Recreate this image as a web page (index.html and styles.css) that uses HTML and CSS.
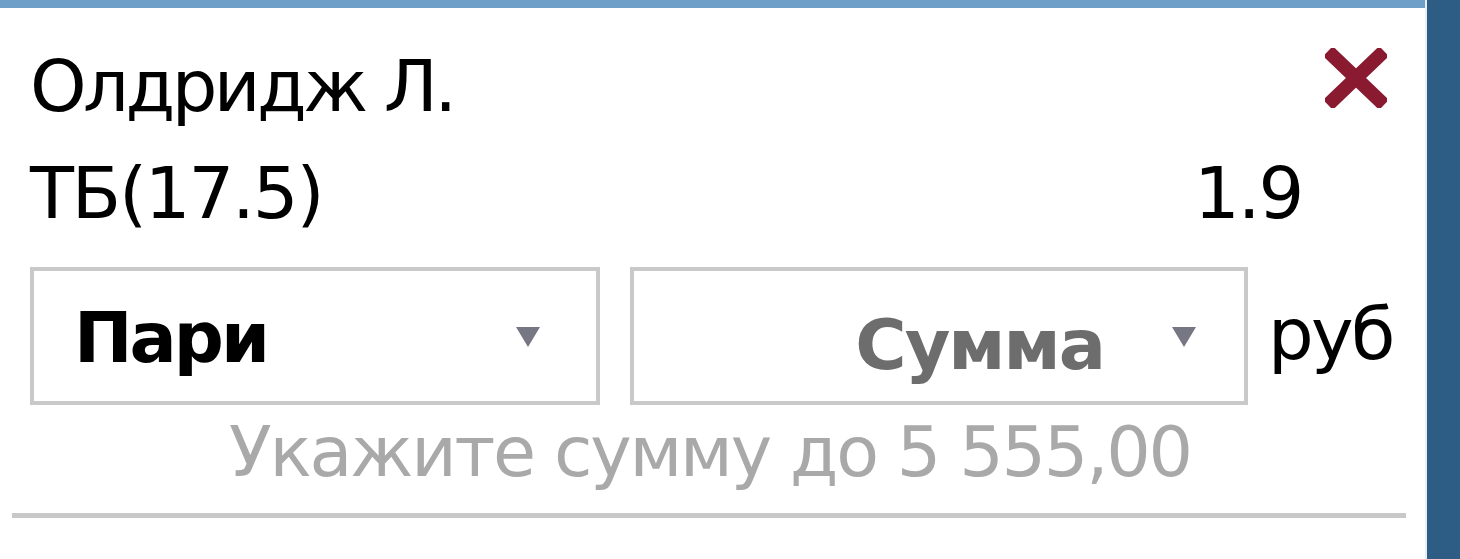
FILE: index.html
```html
<!DOCTYPE html>
<html lang="ru">
<head>
<meta charset="utf-8">
<link rel="stylesheet" href="styles.css">
</head>
<body>
<div class="page">
  <div class="slip">
    <div class="topbar"></div>
    <div class="content">
      <div class="row row-name">
        <span class="name">Олдридж Л.</span>
        <svg class="close" viewBox="0 0 62 60" width="62" height="60"><path d="M8 8 L54 52 M54 8 L8 52" stroke="#8a1a30" stroke-width="14" stroke-linecap="square" fill="none"/></svg>
      </div>
      <div class="row row-bet">
        <span class="bet">ТБ(17.5)</span>
        <span class="odd">1.9</span>
      </div>
      <div class="row row-inputs">
        <div class="select type"><span class="val">Пари</span><span class="arrow"></span></div>
        <div class="select sum"><span class="val">Сумма</span><span class="arrow"></span></div>
        <span class="cur">руб</span>
      </div>
      <div class="hint">Укажите сумму до 5 555,00</div>
      <div class="divider"></div>
    </div>
  </div>
  <div class="sidebar"></div>
</div>
</body>
</html>
```
FILE: styles.css
```css
html, body {
  margin: 0;
  padding: 0;
  background: #ffffff;
}
.page {
  display: flex;
  width: 1460px;
  height: 559px;
  overflow: hidden;
  font-family: "DejaVu Sans", Verdana, sans-serif;
  color: #000;
}
.slip {
  flex: 1;
  display: flex;
  flex-direction: column;
  border-right: 2px solid #e8eef4;
}
.topbar {
  height: 8px;
  background: #6e9fc8;
}
.content {
  padding: 0 55px 0 12px;
  display: flex;
  flex-direction: column;
}
.sidebar {
  width: 33px;
  background: #2d5c85;
}
.row {
  display: flex;
  align-items: center;
  justify-content: space-between;
}
.row-name {
  height: 124px;
  padding-left: 18px;
  padding-top: 32px;
  box-sizing: border-box;
  margin-right: -17px;
}
.name {
  font-size: 72px;
  letter-spacing: -3.6px;
  line-height: 1;
}
.close {
  display: block;
  margin-top: -16px;
}
.row-bet {
  height: 106px;
  padding-left: 18px;
  padding-right: 68px;
  box-sizing: border-box;
  padding-top: 16px;
}
.bet, .odd {
  font-size: 72px;
  letter-spacing: -2.2px;
  line-height: 1;
}
.row-inputs {
  margin-top: 29px;
  padding-left: 18px;
  justify-content: flex-start;
  margin-right: -42px;
}
.select {
  box-sizing: border-box;
  height: 138px;
  border: 4px solid #c9c9c9;
  display: flex;
  align-items: center;
  position: relative;
}
.select.type {
  width: 570px;
  padding-left: 40px;
}
.select.sum {
  width: 618px;
  margin-left: 30px;
  justify-content: flex-end;
  padding-right: 140px;
}
.val {
  font-size: 70px;
  font-weight: bold;
  letter-spacing: -3px;
  line-height: 1;
}
.type .val {
  color: #000;
  margin-top: 4px;
}
.sum .val {
  color: #6d6d6d;
  letter-spacing: -2px;
  margin-top: 18px;
}
.arrow {
  position: absolute;
  width: 0;
  height: 0;
  border-left: 12px solid transparent;
  border-right: 12px solid transparent;
  border-top: 20px solid #777784;
  top: 56px;
}
.type .arrow { right: 56px; }
.sum .arrow { right: 48px; }
.cur {
  font-size: 72px;
  letter-spacing: -2.6px;
  margin-left: 20px;
  line-height: 1;
  margin-top: -4px;
}
.hint {
  text-align: center;
  color: #a9a9a9;
  font-size: 70px;
  letter-spacing: -2.2px;
  line-height: 1;
  margin-top: 12px;
  padding-left: 38px;
}
.divider {
  height: 5px;
  background: #c8c8c8;
  margin-top: 26px;
  margin-right: -36px;
}
```
